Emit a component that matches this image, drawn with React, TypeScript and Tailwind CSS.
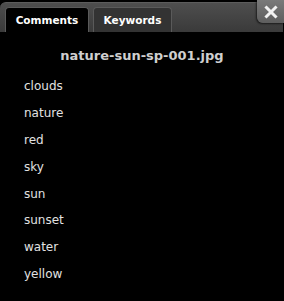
const keywords = ["clouds", "nature", "red", "sky", "sun", "sunset", "water", "yellow"];

function CloseButton() {
  return (
    <button className="absolute right-0 top-0 flex h-[23px] w-[27px] items-center justify-center rounded-bl-[6px] bg-gradient-to-b from-[#7a7a7a] to-[#5e5e5e] shadow-[-1px_1px_2px_rgba(0,0,0,0.6)]">
      <svg width="14" height="14" viewBox="0 0 14 14">
        <path d="M2.5 2.5 L11.5 11.5 M11.5 2.5 L2.5 11.5" stroke="#f2f2f2" strokeWidth="3" strokeLinecap="square" />
      </svg>
    </button>
  );
}

export default function App() {
  return (
    <div
      className="relative h-[301px] w-[284px] overflow-hidden bg-black"
      style={{ fontFamily: '"DejaVu Sans", Verdana, sans-serif' }}
    >
      <div className="mr-[1px] mt-[2px] flex h-[30px] items-end gap-[4px] rounded-tl-[6px] border-t border-[#5c5c5c] bg-gradient-to-b from-[#4e4e4e] to-[#3a3a3a] pl-[5px]">
        <div className="flex h-[25px] w-[84px] items-center justify-center rounded-t-[4px] border border-b-0 border-[#5a5a5a] bg-black pt-[1px] text-[10.5px] font-bold text-white">
          Comments
        </div>
        <div className="flex h-[25px] w-[79px] items-center justify-center rounded-t-[4px] border border-b-0 border-[#5a5a5a] bg-[#333333] pt-[1px] text-[10.5px] font-bold text-white">
          Keywords
        </div>
      </div>
      <CloseButton />
      <h1 className="mt-[14px] text-center text-[13px] font-bold leading-[20px] text-[#cfcfcf]">
        nature-sun-sp-001.jpg
      </h1>
      <ul className="mt-[11px] pl-[24px]">
        {keywords.map((word) => (
          <li key={word} className="h-[26.9px] text-[12px] leading-[18px] text-[#e2e2e2]">
            {word}
          </li>
        ))}
      </ul>
    </div>
  );
}
